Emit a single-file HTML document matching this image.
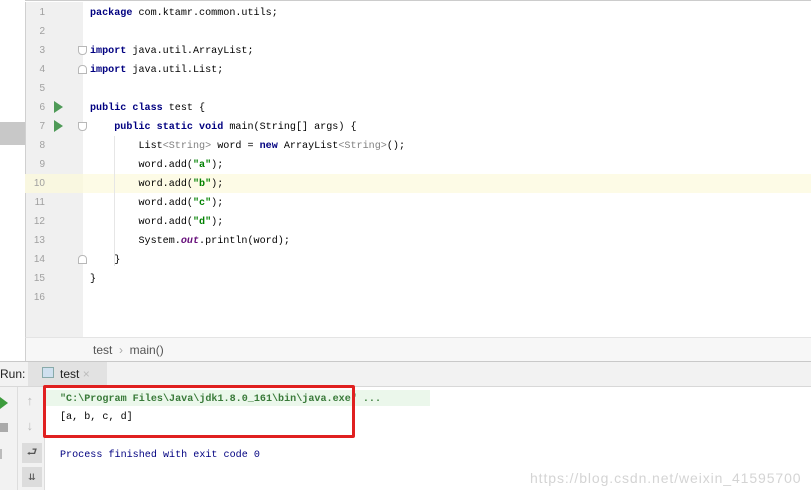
<!DOCTYPE html>
<html><head><meta charset="utf-8"><style>
*{margin:0;padding:0;box-sizing:border-box}
body{width:811px;height:490px;overflow:hidden;background:#fff;position:relative;font-family:"Liberation Mono","Noto Sans CJK SC",monospace}
.a{position:absolute}
.ln{position:absolute;left:25px;width:20px;text-align:right;font:10px "Liberation Sans",sans-serif;color:#a0a0a0}
.code{position:absolute;left:90px;font-size:10.1px;color:#000;white-space:pre;line-height:19px}
.k{color:#000080;font-weight:bold}
.s{color:#008000;font-weight:bold}
.g{color:#808080}
.f{color:#660e7a;font-weight:bold;font-style:italic}
.fold{position:absolute;left:78px;width:9px;height:9px;border:1px solid #b8b8b8;background:#fff;border-radius:0 0 4px 4px}
.run{position:absolute;left:54px;width:0;height:0;border-left:9px solid #4e9a57;border-top:6px solid transparent;border-bottom:6px solid transparent}
</style></head><body>
<div class="a" style="left:25px;top:0;width:786px;height:2px;border-top:1px solid #ccc"></div>
<div class="a" style="left:0;top:122px;width:25px;height:23px;background:#c8c8c8"></div>
<div class="a" style="left:25px;top:2px;width:58px;height:335px;background:#f0f0f0;border-left:1px solid #d0d0d0"></div>
<div class="a" style="left:25px;top:174px;width:786px;height:19px;background:#fdfbe6"></div>
<div class="a" style="left:25px;top:174px;width:58px;height:19px;background:#f9f7e0"></div>
<div class="a" style="left:114px;top:136px;width:1px;height:130px;background:#e6e6e6"></div>
<div class="ln" style="top:7px">1</div><div class="ln" style="top:26px">2</div><div class="ln" style="top:45px">3</div><div class="ln" style="top:64px">4</div><div class="ln" style="top:83px">5</div><div class="ln" style="top:102px">6</div><div class="ln" style="top:121px">7</div><div class="ln" style="top:140px">8</div><div class="ln" style="top:159px">9</div><div class="ln" style="top:178px">10</div><div class="ln" style="top:197px">11</div><div class="ln" style="top:216px">12</div><div class="ln" style="top:235px">13</div><div class="ln" style="top:254px">14</div><div class="ln" style="top:273px">15</div><div class="ln" style="top:292px">16</div>
<div class="run" style="top:101px"></div><div class="run" style="top:120px"></div>
<div class="fold" style="top:46px"></div><div class="fold" style="top:65px;border-radius:4px 4px 0 0"></div><div class="fold" style="top:122px"></div><div class="fold" style="top:255px;border-radius:4px 4px 0 0"></div>
<div class="code" style="top:4px"><span class="k">package</span> com.ktamr.common.utils;

<span class="k">import</span> java.util.ArrayList;
<span class="k">import</span> java.util.List;

<span class="k">public class</span> test {
    <span class="k">public static void</span> main(String[] args) {
        List<span class="g">&lt;String&gt;</span> word = <span class="k">new</span> ArrayList<span class="g">&lt;String&gt;</span>();
        word.add(<span class="s">"a"</span>);
        word.add(<span class="s">"b"</span>);
        word.add(<span class="s">"c"</span>);
        word.add(<span class="s">"d"</span>);
        System.<span class="f">out</span>.println(word);
    }
}</div>
<div class="a" style="left:25px;top:337px;width:786px;height:24px;background:#f7f7f7;border-top:1px solid #e4e4e4;border-left:1px solid #d0d0d0;font:12px 'Liberation Sans',sans-serif;color:#555;padding:5px 0 0 67px">test &nbsp;<span style="color:#aaa">›</span>&nbsp; main()</div>
<div class="a" style="left:0;top:361px;width:811px;height:26px;background:#f2f2f2;border-top:1px solid #c9c9c9;border-bottom:1px solid #d8d8d8"></div>
<div class="a" style="left:0;top:367px;font:12px 'Liberation Sans',sans-serif;color:#222">Run:</div>
<div class="a" style="left:28px;top:362px;width:79px;height:24px;background:#e2e2e2"></div>
<div class="a" style="left:42px;top:367px;width:12px;height:11px;border:1px solid #8aa;background:#cfe0ef"></div>
<div class="a" style="left:60px;top:367px;font:12px 'Liberation Sans',sans-serif;color:#222">test <span style="color:#bbb">×</span></div>
<div class="a" style="left:0;top:387px;width:18px;height:103px;background:#f2f2f2;border-right:1px solid #ddd"></div>
<div class="a" style="left:0;top:397px;width:0;height:0;border-left:8px solid #3c9b3c;border-top:6px solid transparent;border-bottom:6px solid transparent"></div>
<div class="a" style="left:0;top:423px;width:8px;height:9px;background:#aaa"></div>
<div class="a" style="left:0;top:449px;width:2px;height:10px;background:#bbb"></div>
<div class="a" style="left:18px;top:387px;width:27px;height:103px;background:#f2f2f2;border-right:1px solid #ddd"></div>
<div class="a" style="left:26px;top:394px;color:#bbb;font-size:13px">↑</div>
<div class="a" style="left:26px;top:419px;color:#bbb;font-size:13px">↓</div>
<div class="a" style="left:22px;top:443px;width:20px;height:20px;background:#dcdcdc;color:#555;font-size:12px;text-align:center;line-height:20px">⮐</div>
<div class="a" style="left:22px;top:467px;width:20px;height:20px;background:#dcdcdc;color:#555;font-size:12px;text-align:center;line-height:20px">⇊</div>
<div class="a" style="left:45px;top:390px;width:385px;height:16px;background:#ebf7eb"></div>
<div class="code" style="left:60px;top:390px;color:#397a39;font-weight:bold">"C:\Program Files\Java\jdk1.8.0_161\bin\java.exe" ...</div>
<div class="code" style="left:60px;top:408px">[a, b, c, d]</div>
<div class="code" style="left:60px;top:446px;color:#000080">Process finished with exit code 0</div>
<div class="a" style="left:43px;top:385px;width:312px;height:53px;border:3px solid #e02020;border-radius:2px"></div>
<div class="a" style="left:530px;top:470px;font:14px 'Liberation Sans',sans-serif;letter-spacing:0.9px;color:#d4d4d4">https://blog.csdn.net/weixin_41595700</div>
</body></html>
